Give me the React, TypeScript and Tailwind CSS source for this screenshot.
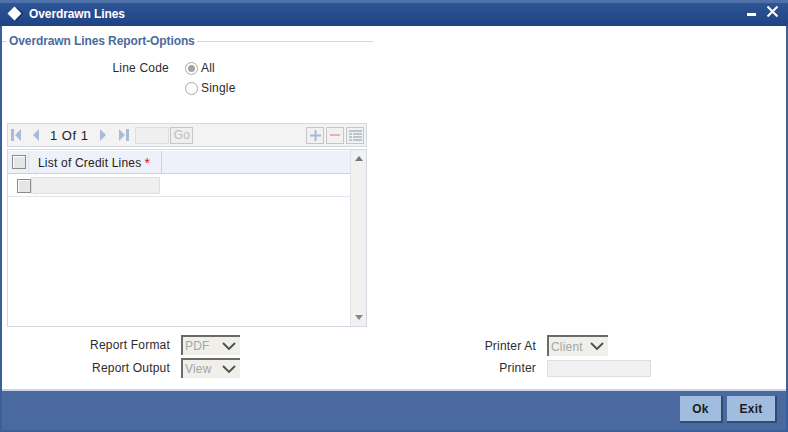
const font = { fontFamily: '"Liberation Sans", Arial, sans-serif' };

function Radio({ checked }: { checked?: boolean }) {
  return (
    <span className="flex h-[13px] w-[13px] items-center justify-center rounded-full border border-[#a8a8a8] bg-white">
      {checked && <span className="h-[7px] w-[7px] rounded-full bg-[#a3a3a3]" />}
    </span>
  );
}

function Check() {
  return <span className="block h-[14px] w-[14px] shrink-0 border border-[#8a8a8a] bg-[#e6e6e6] shadow-[inset_1px_1px_0_#fff]" />;
}

function Pager({ d }: { d: string }) {
  return (
    <svg width={12} height={14} viewBox="0 0 12 14" className="text-[#a9bbd6]" fill="currentColor">
      <path d={d} />
    </svg>
  );
}

function FakeSelect({ label, w, h = 20 }: { label: string; w: string; h?: number }) {
  return (
    <div
      className={`flex items-center justify-between border-t-2 border-l-2 border-t-[#6b6b6b] border-l-[#6b6b6b] bg-[#f0efea] pl-[2px] pr-[4px] text-[12px] text-[#a6a6a6] ${w}`}
      style={{ height: h }}
    >
      <span>{label}</span>
      <svg width={14} height={9} viewBox="0 0 14 9" fill="none" stroke="#4d4d4d" strokeWidth={1.8}>
        <path d="M1 1l6 6 6-6" />
      </svg>
    </div>
  );
}

export default function App() {
  return (
    <div style={font} className="flex h-[432px] w-[788px] flex-col overflow-hidden bg-[#3b5f9b] px-[2px] pb-[2px] text-[12px] tracking-[0.2px] text-[#2b2b2b]">
      {/* title bar */}
      <div className="-mx-[2px] flex h-[26px] shrink-0 items-center justify-between border-t-[3px] border-[#4d72a9] bg-gradient-to-b from-[#2f5596] to-[#1f4285] pb-[2px] pl-[7px] pr-[10px] text-white">
        <div className="flex items-center gap-[5px]">
          <svg width={17} height={15} viewBox="0 0 17 15">
            <path d="M9 1l7.500 6.500L9 15z" fill="#10305f" />
            <path d="M7.500 0.500l7 7-7 7-7-7z" fill="#fff" />
          </svg>
          <span className="text-[12px] font-bold tracking-[-0.1px]">Overdrawn Lines</span>
        </div>
        <div className="-mt-[5px] flex items-center gap-[11px]">
          <span className="mt-[7px] block h-[3px] w-[9px] bg-white" />
          <svg width={11} height={11} viewBox="0 0 11 11" stroke="#fff" strokeWidth={2}>
            <path d="M0.500 0.500l10 10M10.500 0.500l-10 10" />
          </svg>
        </div>
      </div>

      {/* body */}
      <div className="flex h-[363px] shrink-0 flex-col bg-white">
        <div className="mt-[6px] flex w-[371px] items-center gap-[2px] text-[12px] font-bold text-[#4a6b9d]">
          <span className="h-px w-[5px] bg-[#cfd6e0]" />
          <span className="tracking-[-0.1px]">Overdrawn Lines Report-Options</span>
          <span className="h-px flex-1 bg-[#cfd6e0]" />
        </div>

        <div className="mt-[8px] flex h-[20px] items-center">
          <span className="w-[167px] text-right">Line Code</span>
          <span className="ml-[16px]"><Radio checked /></span>
          <span className="ml-[3px]">All</span>
        </div>
        <div className="flex h-[20px] items-center">
          <span className="ml-[183px]"><Radio /></span>
          <span className="ml-[3px]">Single</span>
        </div>

        {/* toolbar */}
        <div className="ml-[5px] mt-[25px] flex h-[24px] w-[360px] items-center border border-[#d3d9e2] bg-[#f3f3f3] pl-[2px] pr-[2px]">
          <Pager d="M1 1h3v12H1zM11 1v12L5 7z" />
          <span className="ml-[8px]"><Pager d="M9 1v12L3 7z" /></span>
          <span className="ml-[8px] pt-px text-[13px] tracking-[0.5px] text-[#222]">1 Of 1</span>
          <span className="ml-[9px]"><Pager d="M3 1v12l6-6z" /></span>
          <span className="ml-[9px]"><Pager d="M1 1v12l6-6zM8 1h3v12H8z" /></span>
          <span className="ml-[5px] h-[17px] w-[34px] border border-[#dedede] bg-[#efefef]" />
          <span className="ml-px flex h-[17px] w-[23px] items-center justify-center border border-[#c6c6c6] bg-[#efefef] text-[12px] text-[#bdbdbd]">Go</span>
          <span className="ml-auto flex h-[17px] w-[18px] items-center justify-center border border-[#c6c6c6] bg-[#f1f1f1]">
            <svg width={11} height={11} viewBox="0 0 11 11" fill="#aab8d8"><path d="M4.500 0h2v4.500H11v2H6.500V11h-2V6.500H0v-2h4.500z" /></svg>
          </span>
          <span className="ml-[2px] flex h-[17px] w-[18px] items-center justify-center border border-[#c6c6c6] bg-[#f1f1f1]">
            <span className="h-[2px] w-[10px] bg-[#e8b0b4]" />
          </span>
          <span className="ml-[2px] flex h-[17px] w-[18px] items-center justify-center border border-[#c6c6c6] bg-[#f1f1f1]">
            <svg width={13} height={11} viewBox="0 0 13 11" fill="#b8c4d8"><path d="M0 0h13v2H0zM0 3h3v2H0zM4 3h9v2H4zM0 6h3v2H0zM4 6h9v2H4zM0 9h3v2H0zM4 9h9v2H4z" /></svg>
          </span>
        </div>

        {/* grid */}
        <div className="ml-[5px] mt-[2px] flex h-[178px] w-[360px] border border-[#d3d9e2]">
          <div className="flex-1 pt-px">
            <div className="flex h-[23px] border-b border-[#c9d0de] bg-[#eef1f9]">
              <div className="flex w-[21px] items-center justify-end border-r border-[#dfe3ea] pr-[2px]"><Check /></div>
              <div className="flex w-[133px] items-center border-r border-[#c9d0de] pl-[9px] pt-px tracking-[0.2px] text-[#222]">
                List of Credit Lines <span className="ml-[3px] pt-[2px] text-[14px] text-[#d42020]">*</span>
              </div>
            </div>
            <div className="flex h-[23px] items-center border-b border-[#e2e5ea]">
              <div className="flex h-full w-[29px] items-center border-r border-[#eceef2] pl-[9px] pt-[2px]"><Check /></div>
              <span className="-ml-[6px] h-[17px] w-[129px] border border-[#dedede] bg-[#efefef]" />
            </div>
          </div>
          <div className="flex w-[16px] flex-col items-center justify-between border-l border-[#dfe3ea] bg-[#f1f1f1] py-[6px]">
            <svg width={8} height={5} viewBox="0 0 8 5" fill="#777"><path d="M4 0l4 5H0z" /></svg>
            <svg width={8} height={5} viewBox="0 0 8 5" fill="#888"><path d="M0 0h8L4 5z" /></svg>
          </div>
        </div>

        {/* report options */}
        <div className="mt-[8px] flex">
          <div className="flex w-[238px] flex-col gap-[3px]">
            <div className="flex items-center">
              <span className="w-[168px] text-right">Report Format</span>
              <FakeSelect label="PDF" w="ml-[11px] w-[59px]" />
            </div>
            <div className="flex items-center">
              <span className="w-[168px] text-right">Report Output</span>
              <FakeSelect label="View" w="ml-[11px] w-[59px]" />
            </div>
          </div>
          <div className="flex flex-col">
            <div className="flex items-center">
              <span className="w-[296px] text-right">Printer At</span>
              <FakeSelect label="Client" w="ml-[11px] w-[61px]" h={21} />
            </div>
            <div className="mt-[3px] flex items-center">
              <span className="w-[296px] text-right">Printer</span>
              <span className="ml-[11px] h-[17px] w-[104px] border border-[#dedede] bg-[#f1f1f1]" />
            </div>
          </div>
        </div>
      </div>

      {/* footer */}
      <div className="flex flex-1 items-start justify-end gap-[4px] border-t-2 border-[#c9d5e6] bg-[#4a699f] pr-[9px] pt-[5px]">
        <button className="h-[27px] w-[43px] border-r-2 border-b-2 border-[#2f4a75] bg-[#a0bde0] text-[12px] font-bold text-[#1c1c1c]">Ok</button>
        <button className="h-[27px] w-[50px] border-r-2 border-b-2 border-[#2f4a75] bg-[#a0bde0] text-[12px] font-bold text-[#1c1c1c]">Exit</button>
      </div>
    </div>
  );
}
